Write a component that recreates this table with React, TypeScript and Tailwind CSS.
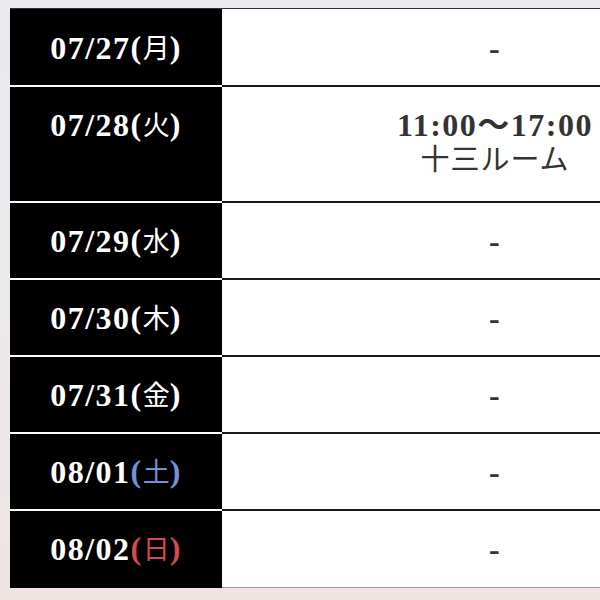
import React from 'react';

type Row = {
  date: string;
  day: string;
  dayColor?: string;
  lines: string[];
};

const rows: Row[] = [
  { date: '07/27', day: '月', lines: ['-'] },
  { date: '07/28', day: '火', lines: ['11:00〜17:00', '十三ルーム'] },
  { date: '07/29', day: '水', lines: ['-'] },
  { date: '07/30', day: '木', lines: ['-'] },
  { date: '07/31', day: '金', lines: ['-'] },
  { date: '08/01', day: '土', dayColor: 'text-[#6f93d6]', lines: ['-'] },
  { date: '08/02', day: '日', dayColor: 'text-[#d24c4c]', lines: ['-'] },
];

export default function App() {
  return (
    <div
      className="w-[600px] h-[600px] overflow-hidden bg-gradient-to-b from-[#e9e9ee] via-[#ece9ec] to-[#efe4e2] pt-[8px] pl-[10px]"
      style={{ fontFamily: '"Liberation Serif", "Noto Sans CJK JP", serif' }}
    >
      <div className="w-[758px] flex flex-col border-t border-[#333]">
        {rows.map((row, i) => {
          const last = i === rows.length - 1;
          const pad = i === 0 ? 'pt-[22px]' : 'pt-[21px]';
          return (
            <div key={row.date} className="flex">
              {/* date cell */}
              <div
                className={`w-[212px] shrink-0 bg-black text-white ${pad} pb-[19px] ${
                  last ? 'border-b-2 border-black' : 'border-b-2 border-white'
                }`}
              >
                <div className="h-[35px] flex items-center justify-center whitespace-nowrap text-[32px] leading-[35px] font-semibold tracking-[1.5px]">
                  {row.date}
                  <span className={row.dayColor}>
                    (<span className="font-normal text-[27px] tracking-normal">{row.day}</span>)
                  </span>
                </div>
              </div>

              {/* schedule cell */}
              <div
                className={`flex-1 bg-white text-[#333] ${pad} ${
                  last ? 'border-b border-[#9a9a9a]' : 'border-b-2 border-[#1a1a1a]'
                } ${i === 1 ? 'pb-[23px]' : 'pb-[19px]'}`}
              >
                {row.lines.map((line, j) => (
                  <div
                    key={j}
                    className={`h-[35px] flex items-center justify-center whitespace-nowrap leading-[35px] ${
                      j === 1 ? 'font-normal text-[29px] tracking-[1px]' : 'font-semibold text-[32px] tracking-[1.5px]'
                    }`}
                  >
                    {line}
                  </div>
                ))}
              </div>
            </div>
          );
        })}
      </div>
    </div>
  );
}
